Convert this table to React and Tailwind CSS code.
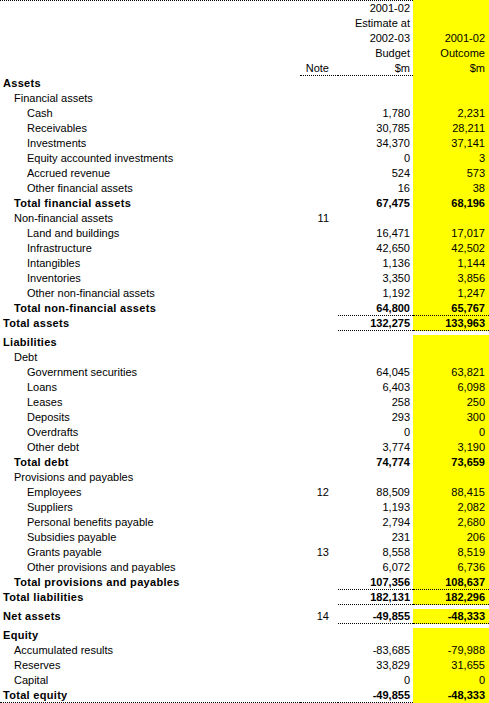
const rows = [
  { label: 'Assets', lvl: 0, bold: true },
  { label: 'Financial assets', lvl: 1 },
  { label: 'Cash', lvl: 2, est: '1,780', out: '2,231' },
  { label: 'Receivables', lvl: 2, est: '30,785', out: '28,211' },
  { label: 'Investments', lvl: 2, est: '34,370', out: '37,141' },
  { label: 'Equity accounted investments', lvl: 2, est: '0', out: '3' },
  { label: 'Accrued revenue', lvl: 2, est: '524', out: '573' },
  { label: 'Other financial assets', lvl: 2, est: '16', out: '38' },
  { label: 'Total financial assets', lvl: 1, bold: true, est: '67,475', out: '68,196' },
  { label: 'Non-financial assets', lvl: 1, note: '11' },
  { label: 'Land and buildings', lvl: 2, est: '16,471', out: '17,017' },
  { label: 'Infrastructure', lvl: 2, est: '42,650', out: '42,502' },
  { label: 'Intangibles', lvl: 2, est: '1,136', out: '1,144' },
  { label: 'Inventories', lvl: 2, est: '3,350', out: '3,856' },
  { label: 'Other non-financial assets', lvl: 2, est: '1,192', out: '1,247' },
  { label: 'Total non-financial assets', lvl: 1, bold: true, est: '64,800', out: '65,767', line: true },
  { label: 'Total assets', lvl: 0, bold: true, est: '132,275', out: '133,963', line: true },
  { label: 'Liabilities', lvl: 0, bold: true, tall: true },
  { label: 'Debt', lvl: 1 },
  { label: 'Government securities', lvl: 2, est: '64,045', out: '63,821' },
  { label: 'Loans', lvl: 2, est: '6,403', out: '6,098' },
  { label: 'Leases', lvl: 2, est: '258', out: '250' },
  { label: 'Deposits', lvl: 2, est: '293', out: '300' },
  { label: 'Overdrafts', lvl: 2, est: '0', out: '0' },
  { label: 'Other debt', lvl: 2, est: '3,774', out: '3,190' },
  { label: 'Total debt', lvl: 1, bold: true, est: '74,774', out: '73,659' },
  { label: 'Provisions and payables', lvl: 1 },
  { label: 'Employees', lvl: 2, note: '12', est: '88,509', out: '88,415' },
  { label: 'Suppliers', lvl: 2, est: '1,193', out: '2,082' },
  { label: 'Personal benefits payable', lvl: 2, est: '2,794', out: '2,680' },
  { label: 'Subsidies payable', lvl: 2, est: '231', out: '206' },
  { label: 'Grants payable', lvl: 2, note: '13', est: '8,558', out: '8,519' },
  { label: 'Other provisions and payables', lvl: 2, est: '6,072', out: '6,736' },
  { label: 'Total provisions and payables', lvl: 1, bold: true, est: '107,356', out: '108,637', line: true },
  { label: 'Total liabilities', lvl: 0, bold: true, est: '182,131', out: '182,296', line: true },
  { label: 'Net assets', lvl: 0, bold: true, tall: true, note: '14', est: '-49,855', out: '-48,333', line: true },
  { label: 'Equity', lvl: 0, bold: true, tall: true },
  { label: 'Accumulated results', lvl: 1, est: '-83,685', out: '-79,988' },
  { label: 'Reserves', lvl: 1, est: '33,829', out: '31,655' },
  { label: 'Capital', lvl: 1, est: '0', out: '0' },
  { label: 'Total equity', lvl: 0, bold: true, est: '-49,855', out: '-48,333', last: true },
]

const indent = ['pl-[3px]', 'pl-[14px]', 'pl-[27px]']

function HeadRow({ note, est, out, line }) {
  const b = line ? 'border-b border-dotted border-black' : ''
  return (
    <div className="flex h-[15px] leading-[13px]">
      <div className="w-[300px]" />
      <div className={`w-[38px] flex items-center justify-end pr-[9px] ${b}`}>{note}</div>
      <div className={`w-[75px] flex items-center justify-end pr-[3px] ${b}`}>{est}</div>
      <div className="w-[76px] flex items-center justify-end pr-[4px] bg-[#ffff00]">{out}</div>
    </div>
  )
}

function Row({ r }) {
  const line = r.line ? 'border-b border-dotted border-black' : ''
  const last = r.last ? 'border-b border-dotted border-black' : ''
  const weight = r.bold ? 'font-bold' : ''
  return (
    <div className={`flex ${r.tall ? 'h-[19px] pt-[4px]' : 'h-[15px]'} leading-[13px]`}>
      <div className={`w-[300px] flex items-center ${indent[r.lvl]} ${r.bold ? 'font-bold tracking-[0.3px]' : ''} ${last}`}>
        {r.label}
      </div>
      <div className={`w-[38px] flex items-center justify-end pr-[9px] ${last}`}>{r.note}</div>
      <div className={`w-[75px] flex items-center justify-end pr-[3px] ${weight} ${line} ${last}`}>{r.est}</div>
      <div className={`w-[76px] flex items-center justify-end pr-[4px] bg-[#ffff00] ${weight} ${line}`}>{r.out}</div>
    </div>
  )
}

export default function App() {
  return (
    <div
      className="w-[489px] h-[703px] bg-white text-black text-[11px] overflow-hidden"
      style={{ fontFamily: '"Liberation Sans", Arial, sans-serif' }}
    >
      <div className="flex h-px">
        <div className="w-[413px] border-t border-dotted border-black" />
        <div className="w-[76px] bg-[#ffff00]" />
      </div>
      <HeadRow est="2001-02" />
      <HeadRow est="Estimate at" />
      <HeadRow est="2002-03" out="2001-02" />
      <HeadRow est="Budget" out="Outcome" />
      <HeadRow note="Note" est="$m" out="$m" line />
      {rows.map((r) => (
        <Row key={r.label} r={r} />
      ))}
    </div>
  )
}
